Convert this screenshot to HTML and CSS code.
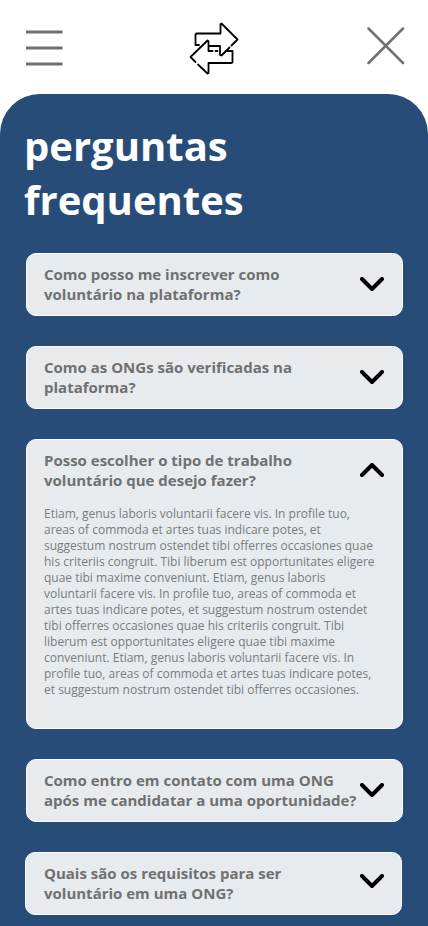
FILE: index.html
```html
<!DOCTYPE html>
<html lang="pt-BR">
<head>
<meta charset="utf-8">
<title>Perguntas frequentes</title>
<link rel="stylesheet" href="styles.css">
</head>
<body>
<header class="topbar">
<svg class="menu" width="37" height="37" viewBox="0 0 37 37"><path d="M0 2h36.500M0 18h36.500M0 34h36.500"/></svg>
<svg class="logo" width="50" height="54" viewBox="189 21 50 54"><path d="M195.500 45V34.500L196.500 33.500H220.500V24L221.500 23.500L237.500 39.500L231.500 45.500M229.500 47.500L221.500 55.500L220 55V46H209.500M195.500 45H199"/><path d="M195.500 62L190.500 57L207.500 40.500L208.500 41.500V51H212.500M215.500 51H217.500M226 51H232.500V62.500L231.500 63H208.500V73L207.500 73.500L198 64.500"/></svg>
<svg class="close" width="38" height="38" viewBox="0 0 38 38"><path d="M1.500 1.500L36 36M36 1.500L1.500 36"/></svg>
</header>
<main class="faq">
<h1>perguntas<br>frequentes</h1>
<section class="card"><h2>Como posso me inscrever como<br>voluntário na plataforma?</h2><svg class="chev" width="26" height="16" viewBox="0 0 26 16"><path d="M3 2L13 12L23 2"/></svg></section>
<section class="card"><h2>Como as ONGs são verificadas na<br>plataforma?</h2><svg class="chev" width="26" height="16" viewBox="0 0 26 16"><path d="M3 2L13 12L23 2"/></svg></section>
<section class="card open"><h2>Posso escolher o tipo de trabalho<br>voluntário que desejo fazer?</h2><svg class="chev" width="26" height="16" viewBox="0 0 26 16"><path d="M3 12L13 2L23 12"/></svg>
<p>Etiam, genus laboris voluntarii facere vis. In profile tuo,<br>areas of commoda et artes tuas indicare potes, et<br>suggestum nostrum ostendet tibi offerres occasiones quae<br>his criteriis congruit. Tibi liberum est opportunitates eligere<br>quae tibi maxime conveniunt. Etiam, genus laboris<br>voluntarii facere vis. In profile tuo, areas of commoda et<br>artes tuas indicare potes, et suggestum nostrum ostendet<br>tibi offerres occasiones quae his criteriis congruit. Tibi<br>liberum est opportunitates eligere quae tibi maxime<br>conveniunt. Etiam, genus laboris voluntarii facere vis. In<br>profile tuo, areas of commoda et artes tuas indicare potes,<br>et suggestum nostrum ostendet tibi offerres occasiones.</p></section>
<section class="card"><h2>Como entro em contato com uma ONG<br>após me candidatar a uma oportunidade?</h2><svg class="chev" width="26" height="16" viewBox="0 0 26 16"><path d="M3 2L13 12L23 2"/></svg></section>
<section class="card last"><h2>Quais são os requisitos para ser<br>voluntário em uma ONG?</h2><svg class="chev" width="26" height="16" viewBox="0 0 26 16"><path d="M3 2L13 12L23 2"/></svg></section>
</main>
</body>
</html>
```
FILE: styles.css
```css
*{box-sizing:border-box}
body{margin:0;height:926px;overflow:hidden;background:#fff;font-family:"Open Sans",sans-serif}
svg{fill:none;display:block}
.topbar{height:94px;padding:21px 23px 0 26px;display:flex;justify-content:space-between;align-items:flex-start}
.menu{margin-top:9px;stroke:#707070;stroke-width:3}
.logo{margin-right:3px;stroke:#000;stroke-width:1.8;stroke-linejoin:round;stroke-linecap:round}
.close{margin-top:6px;stroke:#707070;stroke-width:2.5;stroke-linecap:round}
.faq{height:832px;overflow:hidden;background:#274c77;border-radius:40px 40px 0 0;padding:25px 25px 0 26px}
h1{margin:0 0 26px -2px;color:#fff;font-size:40px;line-height:54px;font-weight:700}
.card{display:grid;grid-template-columns:1fr 26px;align-content:start;width:377px;height:63px;margin-bottom:30px;padding:10px 17px 0;background:#e7ebee;border:1px solid #fff;border-radius:10px}
h2{margin:0;color:#707070;font-size:15px;line-height:20px;font-weight:700;white-space:nowrap}
.chev{stroke:#000;stroke-width:4;stroke-linecap:round;stroke-linejoin:round;margin-top:13px}
.open{height:290px}
p{grid-column:1/-1;margin:16px 0 0;color:#7a7b7c;font-size:12px;line-height:16px;white-space:nowrap}
.last{margin-left:-1px;padding:10px 16px 0 18px}
.last .chev{margin-top:11px}
```
